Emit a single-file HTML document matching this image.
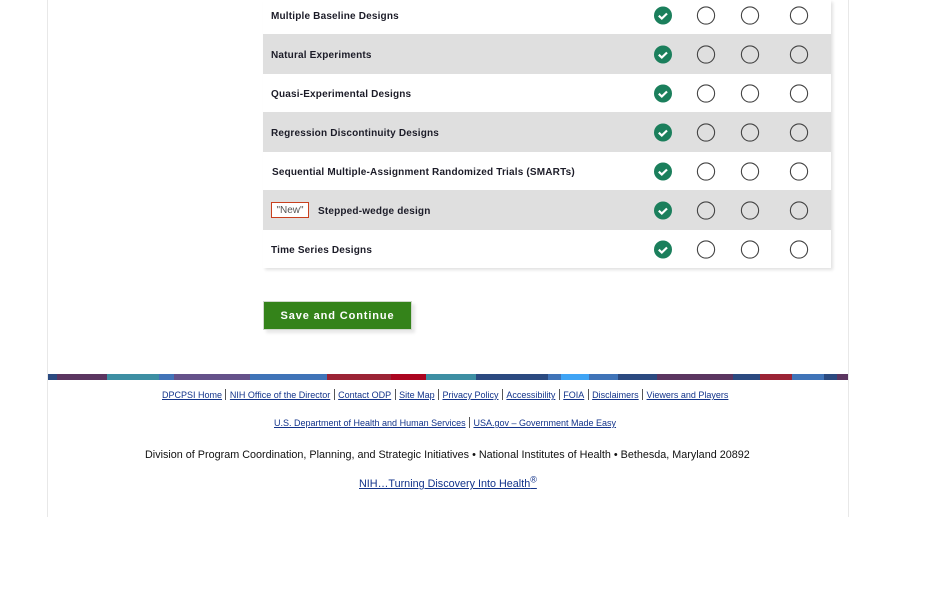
<!DOCTYPE html>
<html><head><meta charset="utf-8">
<style>
html,body{margin:0;padding:0;background:#fff}
body{width:936px;height:590px;position:relative;overflow:hidden;font-family:"Liberation Sans",sans-serif}
.abs,.row,.t,.ck,.r{position:absolute}
.page{left:47px;top:0;width:802px;height:517px;box-sizing:border-box;border-left:1px solid #e8e8e8;border-right:1px solid #e8e8e8;position:absolute}
.table{position:absolute;left:263px;top:0;width:568px;height:268px;box-shadow:2px 2px 3px #e2e2e2;background:#fff}
.row{left:0;width:568px}
.g{background:#dfdfdf}
.t{font-weight:bold;font-size:10px;letter-spacing:.18px;color:#1c1c28;line-height:12px;white-space:nowrap}
svg{position:absolute;overflow:visible}
.bar{position:absolute;top:374px;height:6px}
.f{position:absolute;white-space:nowrap;font-size:9px;line-height:12px;color:#333;letter-spacing:0}
.f a{color:#12338a;text-decoration:underline}
.f i{font-style:normal;display:inline-block;width:1px;height:11px;background:#555;margin:0 3.45px;vertical-align:-2px}
.btn{position:absolute;left:263px;top:301px;width:149px;height:29px;box-sizing:border-box;background:#34831a;border:1px solid #cfd8cc;box-shadow:3px 3px 3px #e8e8e8;color:#fff;font-weight:bold;font-size:11px;letter-spacing:.88px;line-height:28px;text-align:center}
.new{position:absolute;left:271px;top:202px;width:38px;height:16px;box-sizing:border-box;border:1px solid #c8401e;background:#fff;color:#555;font-size:10px;line-height:15px;text-align:center}
</style></head>
<body>
<div class="page"></div>
<div class="table">
<div class="row g" style="top:34px;height:40px"></div>
<div class="row g" style="top:112px;height:40px"></div>
<div class="row g" style="top:190px;height:40px"></div>
</div>
<div class="t" style="left:271px;top:11px">Multiple Baseline Designs</div>
<div class="t" style="left:271px;top:50px">Natural Experiments</div>
<div class="t" style="left:271px;top:89px">Quasi-Experimental Designs</div>
<div class="t" style="left:271px;top:128px">Regression Discontinuity Designs</div>
<div class="t" style="left:272px;top:167px">Sequential Multiple-Assignment Randomized Trials (SMARTs)</div>
<div class="new">"New"</div>
<div class="t" style="left:318px;top:206px">Stepped-wedge design</div>
<div class="t" style="left:271px;top:245px">Time Series Designs</div>
<svg width="936" height="590" style="left:0;top:0" fill="none">
<defs>
<g id="c"><circle cx="663" cy="0" r="9" fill="#1b7f5c"/><path d="M658.8 .2l3 2.8 5.2-5" stroke="#fff" stroke-width="2.2"/>
<circle cx="706" cy="0" r="8.6" fill="none" stroke="#444" stroke-width="1.1"/>
<circle cx="750" cy="0" r="8.6" fill="none" stroke="#444" stroke-width="1.1"/>
<circle cx="799" cy="0" r="8.6" fill="none" stroke="#444" stroke-width="1.1"/></g>
</defs>
<use href="#c" y="15.5"/><use href="#c" y="54.5"/><use href="#c" y="93.5"/><use href="#c" y="132.5"/><use href="#c" y="171.5"/><use href="#c" y="210.5"/><use href="#c" y="249.5"/>
</svg>
<div class="btn">Save and Continue</div>
<div class="bar" style="left:48px;width:9px;background:#2b4a80"></div>
<div class="bar" style="left:57px;width:50px;background:#5b3560"></div>
<div class="bar" style="left:107px;width:52px;background:#3d8fa3"></div>
<div class="bar" style="left:159px;width:15px;background:#4274b8"></div>
<div class="bar" style="left:174px;width:76px;background:#65528a"></div>
<div class="bar" style="left:250px;width:77px;background:#4074b8"></div>
<div class="bar" style="left:327px;width:64px;background:#9b2335"></div>
<div class="bar" style="left:391px;width:35px;background:#ab0520"></div>
<div class="bar" style="left:426px;width:50px;background:#3d8fa3"></div>
<div class="bar" style="left:476px;width:72px;background:#2b4a80"></div>
<div class="bar" style="left:548px;width:13px;background:#4074b8"></div>
<div class="bar" style="left:561px;width:28px;background:#3fa4f5"></div>
<div class="bar" style="left:589px;width:29px;background:#4074b8"></div>
<div class="bar" style="left:618px;width:39px;background:#2b4a80"></div>
<div class="bar" style="left:657px;width:76px;background:#5b3560"></div>
<div class="bar" style="left:733px;width:27px;background:#2b4a80"></div>
<div class="bar" style="left:760px;width:32px;background:#9b2335"></div>
<div class="bar" style="left:792px;width:32px;background:#4074b8"></div>
<div class="bar" style="left:824px;width:13px;background:#2b4a80"></div>
<div class="bar" style="left:837px;width:11px;background:#5b3560"></div>
<div class="f" style="left:162px;top:389px"><a>DPCPSI Home</a><i></i><a>NIH Office of the Director</a><i></i><a>Contact ODP</a><i></i><a>Site Map</a><i></i><a>Privacy Policy</a><i></i><a>Accessibility</a><i></i><a>FOIA</a><i></i><a>Disclaimers</a><i></i><a>Viewers and Players</a></div>
<div class="f" style="left:274px;top:417px"><a>U.S. Department of Health and Human Services</a><i></i><a>USA.gov – Government Made Easy</a></div>
<div class="f" style="left:145px;top:449px;font-size:10.8px;color:#111">Division of Program Coordination, Planning, and Strategic Initiatives • National Institutes of Health • Bethesda, Maryland 20892</div>
<div class="f" style="left:359px;top:478px;font-size:10.8px"><a>NIH…Turning Discovery Into Health<sup style="font-size:9px;line-height:0">®</sup></a></div>
</body></html>
